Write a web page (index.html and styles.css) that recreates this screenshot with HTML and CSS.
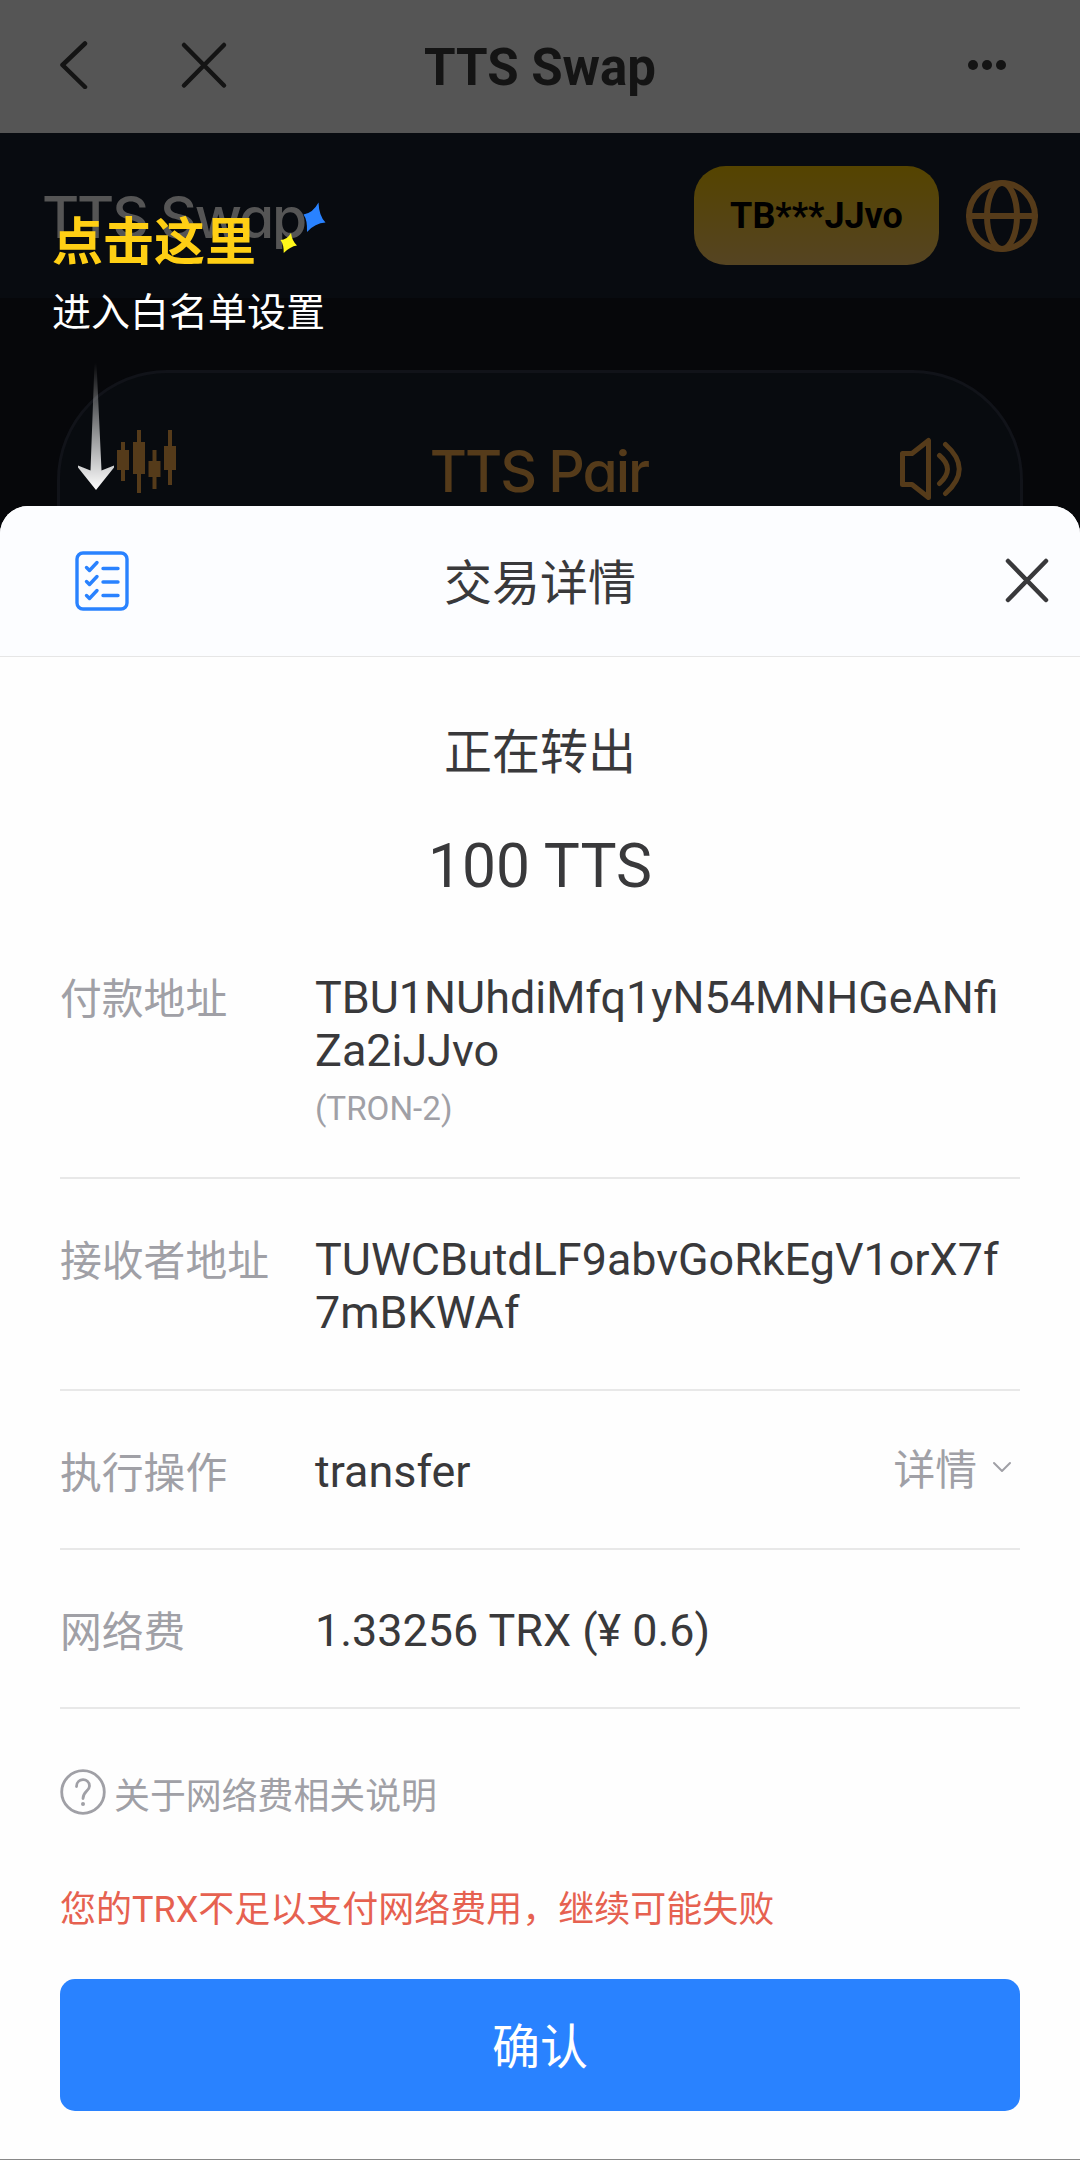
FILE: index.html
```html
<!DOCTYPE html>
<html lang="zh-CN">
<head>
<meta charset="utf-8">
<title>TTS Swap</title>
<link rel="stylesheet" href="styles.css">
</head>
<body>
<div class="screen">
  <header class="topbar">
    <div class="topbar-nav">
      <svg class="nav-icon" viewBox="0 0 48 48"><path d="M37 2.500L14.500 24L37 46"/></svg>
      <svg class="nav-icon" viewBox="0 0 48 48"><path d="M4 4L44 44.500M44 4L4 44.500"/></svg>
    </div>
    <h1 class="topbar-title">TTS Swap</h1>
    <svg class="more-icon" viewBox="0 0 40 12"><circle cx="6" cy="6" r="5"/><circle cx="20" cy="6" r="5"/><circle cx="34" cy="6" r="5"/></svg>
  </header>

  <div class="app-header">
    <span class="brand">TTS Swap</span>
    <span class="account">TB***JJvo</span>
    <svg class="globe" viewBox="0 0 72 72"><circle cx="36" cy="36" r="33"/><ellipse cx="36" cy="36" rx="15" ry="33"/><path d="M3 36H69"/></svg>
  </div>

  <section class="pair-card">
    <svg class="candles" viewBox="0 0 60 64"><path d="M5 12h4v8h4v20h-4v11h-4v-11h-4v-20h4zM21 0h4v12h4v32h-4v19h-4v-19h-4v-32h4zM36.500 20h4v11h4v16h-4v12h-4v-12h-4v-16h4zM52 0h4v16h4v24h-4v15h-4v-15h-4v-24h4z"/></svg>
    <span class="pair-title">TTS Pair</span>
    <svg class="speaker" viewBox="0 0 64 64"><path d="M3.500 16.500h9.500L29.500 3.500V60.500L13 47.500H3.500zM40.500 18.500Q56.500 32 40.500 46.500M46.500 7.500Q74 32 46.500 56.500"/></svg>
  </section>

  <div class="guide">
    <div class="guide-title">点击这里</div>
    <div class="guide-text">进入白名单设置</div>
    <svg class="guide-arrow" viewBox="0 0 38 128">
      <defs><linearGradient id="fade" x1="0" y1="0" x2="0" y2="1"><stop offset="0" stop-color="#fff" stop-opacity="0"/><stop offset="1" stop-color="#fff"/></linearGradient></defs>
      <path fill="url(#fade)" d="M17.500 0H19.500L24.500 107.500L37 102.500V104.500L19 127L1 104.500V102.500L13.500 107.500Z"/>
    </svg>
    <svg class="sparkles" viewBox="0 0 48 54"><path fill="#2982ff" d="M39.500 1.500Q40 15 46.500 21.500Q36 22 28 31Q28.500 19 24.500 13.500Q34 12 39.500 1.500Z"/><path fill="#fff81a" d="M12 32Q13 40 18 44.500Q11 45.500 4.700 52Q5 44 1.500 39Q8 39 12 32Z"/></svg>
  </div>

  <main class="sheet">
    <div class="sheet-head">
      <svg class="list-icon" viewBox="0 0 54 60"><rect x="2" y="2" width="50" height="56" rx="6"/><path d="M28 17.500H43M28 31H43M28 44.500H43M11.500 16.500l3 3l7.500-8M11.500 30.500l3 3l7.500-8M11.500 44.500l3 3l7.500-8"/></svg>
      <h2 class="sheet-title">交易详情</h2>
      <svg class="close-icon" viewBox="0 0 46 46"><path d="M4 3L42 42M42 3L4 42"/></svg>
    </div>

    <div class="sheet-body">
      <p class="status">正在转出</p>
      <p class="amount">100 TTS</p>

      <div class="row row-payer">
        <span class="label">付款地址</span>
        <div class="value">TBU1NUhdiMfq1yN54MNHGeANfi<br>Za2iJJvo<div class="wallet">(TRON-2)</div></div>
      </div>
      <div class="row">
        <span class="label">接收者地址</span>
        <div class="value">TUWCButdLF9abvGoRkEgV1orX7f<br>7mBKWAf</div>
      </div>
      <div class="row">
        <span class="label">执行操作</span>
        <div class="value">transfer</div>
        <span class="more">详情<svg class="chevron" viewBox="0 0 20 12"><path d="M2 2L10 10L18 2"/></svg></span>
      </div>
      <div class="row">
        <span class="label">网络费</span>
        <div class="value">1.33256 TRX (¥ 0.6)</div>
      </div>

      <div class="help">
        <svg class="help-icon" viewBox="0 0 46 46"><circle cx="23" cy="23" r="21.300"/><path d="M16.500 17.500C16.500 8.500 29.500 8.500 29.500 17C29.500 22 23 22.500 23 29.500"/><circle class="help-dot" cx="23" cy="35" r="2"/></svg>
        <span>关于网络费相关说明</span>
      </div>
      <p class="warning">您的TRX不足以支付网络费用，继续可能失败</p>
      <button class="confirm">确认</button>
    </div>
  </main>
</div>
</body>
</html>
```
FILE: styles.css
```css
* {
  box-sizing: border-box;
}

body {
  margin: 0;
  font-family: Roboto, "Noto Sans CJK SC", sans-serif;
}

h1, h2, p {
  margin: 0;
  font-weight: 400;
}

svg {
  display: block;
  flex: none;
  fill: none;
  stroke-linecap: round;
  stroke-linejoin: round;
}

.screen {
  position: relative;
  width: 1080px;
  height: 2160px;
  overflow: hidden;
  background: #06070a;
}

.topbar {
  display: grid;
  grid-template-columns: 1fr auto 1fr;
  align-items: center;
  height: 133px;
  padding: 0 73px 3px 48px;
  background: #555;
}

.topbar-nav {
  display: flex;
  gap: 84px;
}

.nav-icon {
  width: 48px;
  height: 48px;
  stroke: #141414;
  stroke-width: 4.5;
}

.topbar-title {
  padding: 6px 0 0 25px;
  font-size: 51px;
  line-height: 60px;
  font-weight: 700;
  color: #141414;
}

.more-icon {
  width: 40px;
  height: 12px;
  justify-self: end;
  fill: #141414;
}

.app-header {
  display: flex;
  align-items: center;
  height: 165px;
  padding: 0 42px 0 42px;
  background: #080b10;
}

.brand {
  flex: 1;
  margin-top: 4px;
  font-family: Inter, Roboto, sans-serif;
  font-feature-settings: "cv11";
  font-size: 57px;
  font-weight: 500;
  letter-spacing: -2.1px;
  color: #555;
}

.account {
  width: 245px;
  height: 99px;
  margin-right: 27px;
  padding-top: 1px;
  border-radius: 32px;
  background: linear-gradient(#554400, #554422);
  font-size: 36px;
  line-height: 99px;
  font-weight: 700;
  text-align: center;
  color: #000;
}

.globe {
  width: 72px;
  height: 72px;
  stroke: #553b1a;
  stroke-width: 6;
}

.pair-card {
  display: flex;
  align-items: center;
  justify-content: space-between;
  width: 966px;
  height: 400px;
  margin: 72px auto 0;
  padding: 0 57px 202px 56px;
  border: 3px solid #111319;
  border-radius: 110px;
  background: #080b0f;
}

.candles {
  width: 60px;
  height: 64px;
  margin-top: -14px;
  fill: #553b1a;
}

.pair-title {
  padding: 4px 0 0 3px;
  font-family: Inter, Roboto, sans-serif;
  font-feature-settings: "cv11";
  font-size: 57px;
  font-weight: 500;
  letter-spacing: -2px;
  color: #553b1a;
}

.speaker {
  width: 64px;
  height: 64px;
  stroke: #553b1a;
  stroke-width: 5;
}

/* Onboarding hint floating above the page */
.guide {
  position: absolute;
  top: 201px;
  left: 52px;
  width: 290px;
  font-family: "Noto Sans CJK SC", sans-serif;
}

.guide-title {
  padding-top: 1px;
  font-size: 51px;
  line-height: 73px;
  font-weight: 700;
  color: #ffcf14;
}

.guide-text {
  font-size: 39px;
  line-height: 68px;
  color: #fff;
}

.guide-arrow {
  width: 38px;
  height: 128px;
  margin: 20px 0 0 25px;
}

.sparkles {
  position: absolute;
  top: 0;
  left: 227px;
  width: 48px;
  height: 54px;
}

/* Bottom sheet over the page */
.sheet {
  position: absolute;
  inset: 506px 0 0;
  overflow: hidden;
  border-bottom: 1px solid #888;
  border-radius: 28px 28px 0 0;
  background: #fefefe;
  color: #39393b;
}

.sheet-head {
  display: grid;
  grid-template-columns: 1fr auto 1fr;
  align-items: center;
  height: 151px;
  padding: 0 30px 0 75px;
  border-bottom: 1px solid #e6e6e6;
  background: #fcfdff;
}

.list-icon {
  width: 54px;
  height: 60px;
  stroke: #2982ff;
  stroke-width: 3.4;
}

.sheet-title {
  padding-right: 45px;
  font-size: 48px;
  line-height: 60px;
  transform: translateY(3px);
}

.close-icon {
  width: 46px;
  height: 46px;
  justify-self: end;
  stroke: #39393b;
  stroke-width: 4.5;
}

.sheet-body {
  padding: 62px 60px 0;
}

.status {
  font-size: 48px;
  line-height: 68px;
  text-align: center;
}

.amount {
  margin-top: 45px;
  font-size: 60.5px;
  line-height: 70px;
  text-align: center;
}

.row {
  display: flex;
  align-items: flex-start;
  padding: 54px 0 50px;
  border-bottom: 2px solid #e8e8e8;
  font-size: 44.9px;
  line-height: 53px;
}

.row-payer {
  margin-top: 15px;
  padding-bottom: 49px;
}

.label {
  width: 255px;
  margin: 2px 0 -2px;
  font-size: 41.8px;
  color: #a0a0a6;
}

.value {
  flex: 1;
  white-space: nowrap;
}

.wallet {
  margin-top: 13px;
  font-size: 33.2px;
  line-height: 38px;
  color: #a0a0a6;
}

.more {
  display: flex;
  align-items: center;
  gap: 15px;
  margin: -1px 0 1px;
  padding-right: 8px;
  font-size: 41.75px;
  color: #a0a0a6;
}

.chevron {
  width: 20px;
  height: 12px;
  margin-top: -7px;
  stroke: #a0a0a6;
  stroke-width: 2;
}

.help {
  display: flex;
  align-items: center;
  gap: 8px;
  height: 53px;
  margin-top: 56px;
  font-size: 35.9px;
  line-height: 46px;
  color: #a0a0a6;
}

.help span {
  margin-top: 11px;
}

.help-icon {
  width: 46px;
  height: 46px;
  stroke: #a0a0a6;
  stroke-width: 2.8;
}

.help-dot {
  fill: #a0a0a6;
  stroke: none;
}

.warning {
  margin-top: 66px;
  font-size: 36px;
  line-height: 52px;
  color: #e66150;
}

.confirm {
  display: block;
  width: 960px;
  height: 132px;
  margin-top: 43px;
  padding: 6px 0 0;
  border: 0;
  border-radius: 15px;
  background: #2982ff;
  font: 48px/126px Roboto, "Noto Sans CJK SC", sans-serif;
  color: #fff;
}
```
